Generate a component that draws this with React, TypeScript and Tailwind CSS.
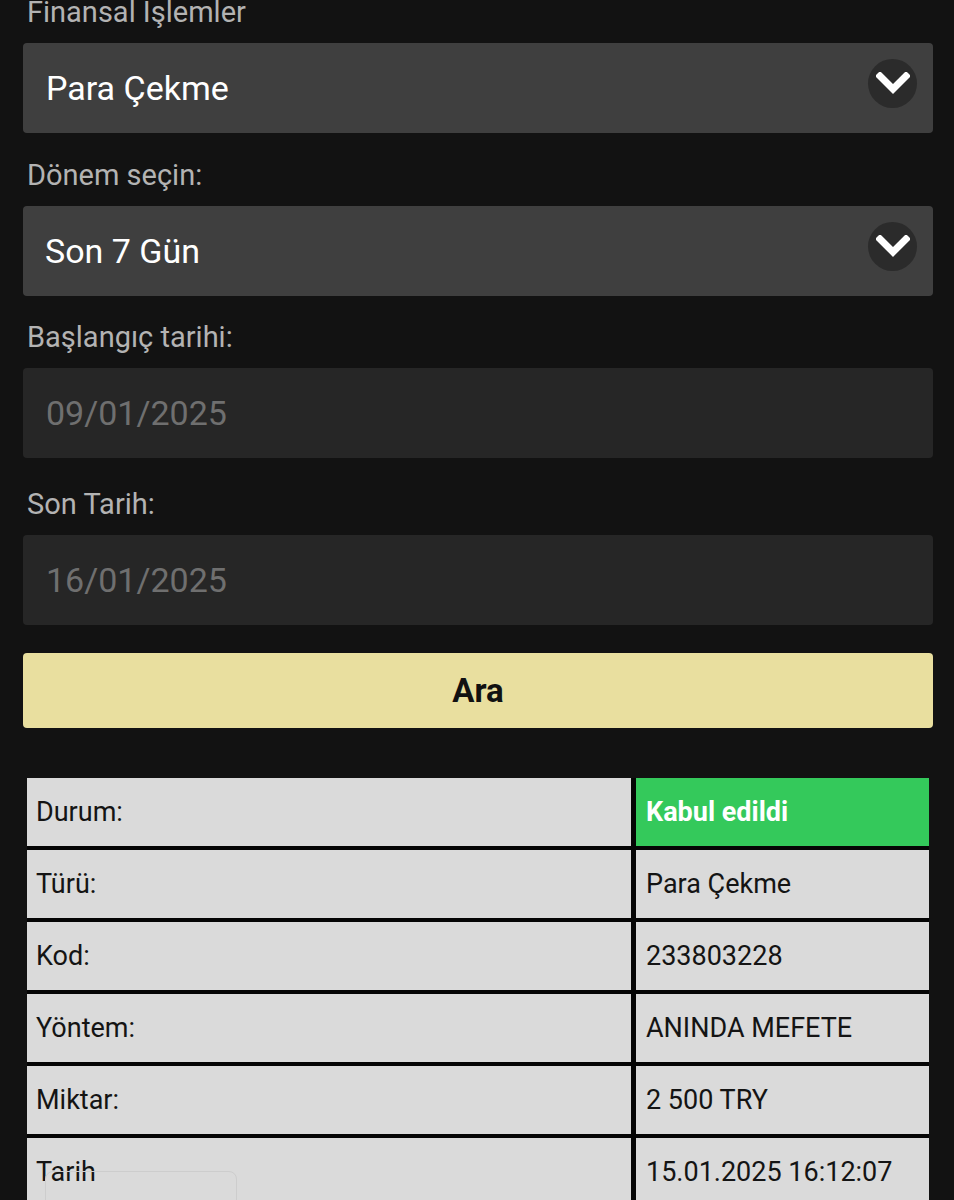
import React from "react";

const font = { fontFamily: "Roboto, 'Noto Sans', sans-serif" };

function Chevron() {
  return (
    <div className="w-[49px] h-[49px] rounded-full bg-[#2b2b2b] flex items-center justify-center -mt-[10px]">
      <svg width="34" height="22" viewBox="0 0 34 22">
        <path d="M4 4 L17 17 L30 4" fill="none" stroke="#ffffff" strokeWidth="7" strokeLinecap="square" strokeLinejoin="miter" />
      </svg>
    </div>
  );
}

function Label({ children, className = "" }: { children: React.ReactNode; className?: string }) {
  return (
    <div className={"h-[33px] leading-[33px] text-[29px] text-[#b3b3b3] pl-[4px] mb-[14px] " + className}>{children}</div>
  );
}

const rows: [string, string, boolean?][] = [
  ["Durum:", "Kabul edildi", true],
  ["Türü:", "Para Çekme"],
  ["Kod:", "233803228"],
  ["Yöntem:", "ANINDA MEFETE"],
  ["Miktar:", "2 500 TRY"],
  ["Tarih", "15.01.2025 16:12:07"],
];

export default function App() {
  return (
    <div className="w-[954px] h-[1200px] bg-[#121212] overflow-hidden relative" style={font}>
      <div className="pl-[23px] pr-[21px] relative">
        <Label className="-mt-[4px]">Finansal Işlemler</Label>
        <div className="h-[90px] rounded-[4px] bg-[#3f3f3f] flex items-center justify-between pl-[23px] pr-[16px]">
          <span className="text-[34px] text-white">Para Çekme</span>
          <Chevron />
        </div>

        <Label className="mt-[26px]">Dönem seçin:</Label>
        <div className="h-[90px] rounded-[4px] bg-[#3f3f3f] flex items-center justify-between pl-[22px] pr-[16px]">
          <span className="text-[34px] text-white">Son 7 Gün</span>
          <Chevron />
        </div>

        <Label className="mt-[25px]">Başlangıç tarihi:</Label>
        <div className="h-[90px] rounded-[4px] bg-[#262626] flex items-center pl-[23px]">
          <span className="text-[34px] text-[#6f6f6f]">09/01/2025</span>
        </div>

        <Label className="mt-[30px]">Son Tarih:</Label>
        <div className="h-[90px] rounded-[4px] bg-[#262626] flex items-center pl-[23px]">
          <span className="text-[34px] text-[#6f6f6f]">16/01/2025</span>
        </div>

        <div className="mt-[28px] h-[75px] rounded-[4px] bg-[#e9df9f] flex items-center justify-center">
          <span className="text-[33px] font-bold text-[#111111]">Ara</span>
        </div>

        <div className="mt-[50px] mx-[4px] grid grid-cols-[604px_1fr] gap-x-[5px] gap-y-[4px] bg-[#050505]">
          {rows.map(([k, v, green], i) => (
            <React.Fragment key={i}>
              <div className="h-[68px] bg-[#dadada] flex items-center pl-[9px] text-[27px] text-[#141414]">{k}</div>
              <div
                className={
                  "h-[68px] flex items-center pl-[10px] text-[27px] " +
                  (green ? "bg-[#34c95b] text-white font-bold" : "bg-[#dadada] text-[#141414]")
                }
              >
                {v}
              </div>
            </React.Fragment>
          ))}
        </div>
      </div>
      <div className="absolute left-[45px] top-[1171px] w-[192px] h-[60px] rounded-[8px] border border-[#cdcdcd] pointer-events-none" />
    </div>
  );
}
